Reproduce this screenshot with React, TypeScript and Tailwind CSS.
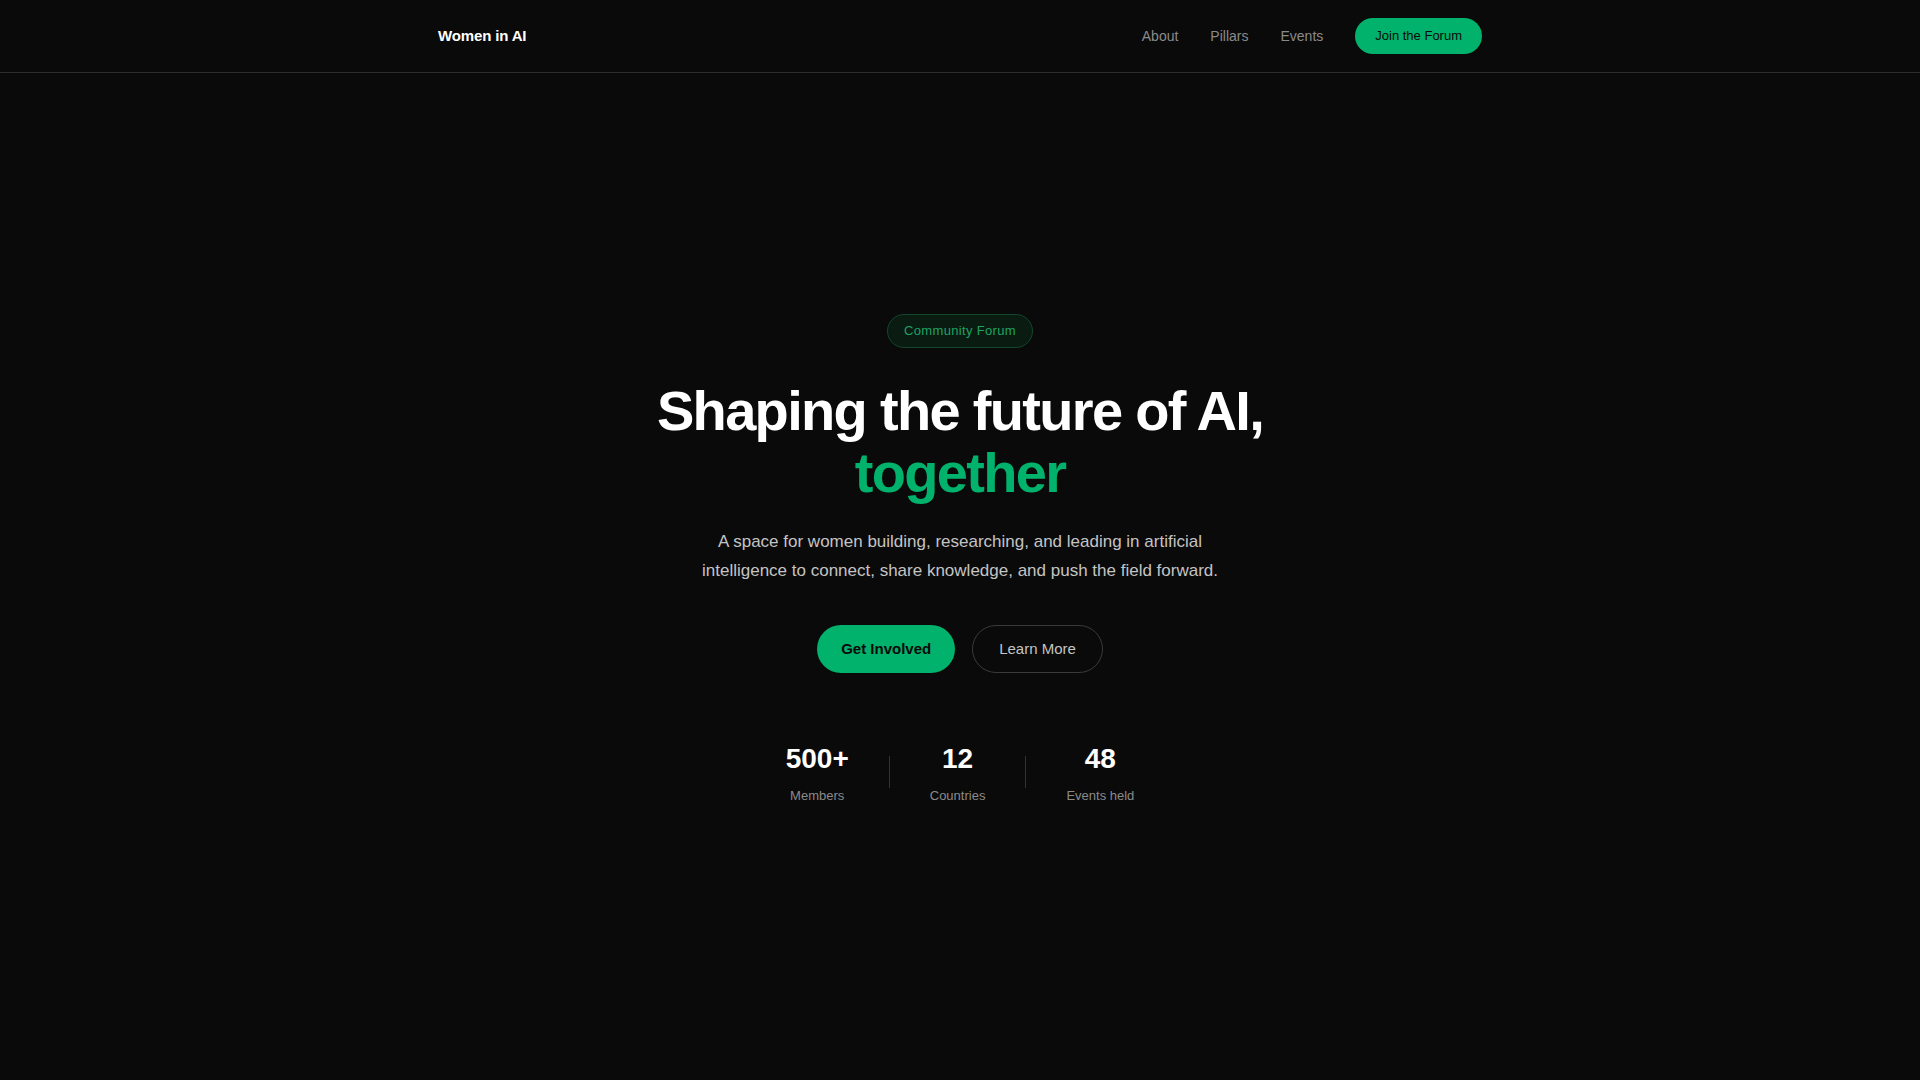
import React from "react";

const stats = [
  { value: "500+", label: "Members" },
  { value: "12", label: "Countries" },
  { value: "48", label: "Events held" },
];

export default function App() {
  return (
    <div
      className="min-h-screen bg-[#0a0a0a] text-white"
      style={{ fontFamily: '"Liberation Sans", Arial, sans-serif' }}
    >
      <header className="border-b border-[#2e2e2e]">
        <nav className="mx-auto flex h-[72px] max-w-[1044px] items-center justify-between">
          <a className="text-[15px] font-bold tracking-[-0.01em] text-white">Women in AI</a>
          <div className="flex items-center gap-8">
            <a className="text-[14px] text-[#8a8a8a]">About</a>
            <a className="text-[14px] text-[#8a8a8a]">Pillars</a>
            <a className="text-[14px] text-[#8a8a8a]">Events</a>
            <button className="h-9 rounded-full bg-[#00b26b] px-5 text-[13px] text-[#0a0a0a]">
              Join the Forum
            </button>
          </div>
        </nav>
      </header>

      <main className="flex flex-col items-center pt-[241px] text-center">
        <span className="rounded-full border border-[#12472b] bg-[#0a1b12] px-4 py-2 text-[13px] leading-[16px] tracking-wide text-[#1ea362]">
          Community Forum
        </span>
        <h1 className="mt-8 text-[56px] font-bold leading-[1.1] tracking-[-0.03em] text-white">
          Shaping the future of AI,
          <br />
          <span className="text-[#00b26b]">together</span>
        </h1>
        <p className="mt-6 max-w-[540px] text-[17px] leading-[29px] text-[#c4c4c4]">
          A space for women building, researching, and leading in artificial intelligence to
          connect, share knowledge, and push the field forward.
        </p>
        <div className="mt-10 flex items-center gap-[17px]">
          <button className="h-12 rounded-full bg-[#00b26b] px-6 text-[15px] font-bold text-[#0a0a0a]">
            Get Involved
          </button>
          <button className="h-12 rounded-full border border-[#3a3a3a] px-[26px] text-[15px] text-[#c4c4c4]">
            Learn More
          </button>
        </div>
        <div className="mt-[72px] flex items-start gap-10">
          {stats.map((s, i) => (
            <React.Fragment key={s.label}>
              {i > 0 && <div className="mt-[11px] h-8 w-px bg-[#333333]" />}
              <div className="flex flex-col items-center">
                <span className="text-[28px] font-bold leading-none text-white">{s.value}</span>
                <span className="mt-[13px] text-[13px] leading-5 text-[#8a8a8a]">{s.label}</span>
              </div>
            </React.Fragment>
          ))}
        </div>
      </main>
    </div>
  );
}
